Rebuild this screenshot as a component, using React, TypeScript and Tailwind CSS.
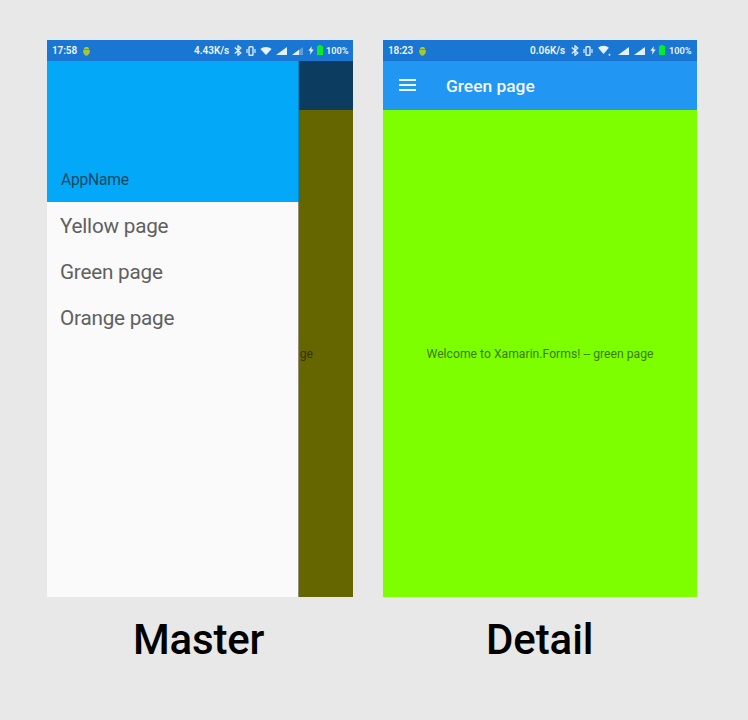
import React from "react";

function Android() {
  return (
    <svg width="7" height="10" viewBox="0 0 7 10" className="shrink-0">
      <path d="M.8 3.4C.8 1.6 2 1 3.5 1s2.7.6 2.7 2.4z" fill="#a4c639" />
      <path d="M.8 4h5.4v3.6L4.9 9.4H2.1L.8 7.6z" fill="#a4c639" />
      <path d="M.5 4v3M6.5 4v3" stroke="#8fbb5a" strokeWidth=".8" />
    </svg>
  );
}

function Bluetooth() {
  return (
    <svg width="8" height="11" viewBox="0 0 8 11" className="shrink-0">
      <path d="M.8 2.6l6 5.3L4 10.2V.8l2.8 2.3L.8 8.4" fill="none" stroke="#e3effb" strokeWidth="1.3" />
    </svg>
  );
}

function Vibrate() {
  return (
    <svg width="10" height="10" viewBox="0 0 10 10" className="shrink-0">
      <rect x="3" y=".8" width="4" height="8.4" rx=".8" fill="none" stroke="#dceafa" strokeWidth="1.4" />
      <path d="M1 3v4M9 3v4" stroke="#cfe2f7" strokeWidth="1.3" />
    </svg>
  );
}

function Wifi({ plus = false }: { plus?: boolean }) {
  return (
    <svg width={plus ? 14 : 12} height="12" viewBox={plus ? "0 0 14 12" : "0 0 12 12"} className="shrink-0">
      <path
        d={plus ? "M.1 2.8C2.8-.1 8.2-.1 10.9 2.8L5.5 8.9z" : "M.4 4C3.2 1.3 8.8 1.3 11.6 4L6 9.9z"}
        fill="#e8f2fc"
      />
      {plus && <path d="M10.3 9.8h2.4M11.5 8.6v2.4" stroke="#b9d6f4" strokeWidth=".9" />}
    </svg>
  );
}

function Signal({ weak = false }: { weak?: boolean }) {
  return (
    <svg width="11" height="8" viewBox="0 0 11 8" className="shrink-0">
      <path d="M0 8L11 0v8z" fill={weak ? "#5f9fde" : "#e3effb"} />
      {weak && <path d="M0 8L7 2.8V8z" fill="#e3effb" />}
    </svg>
  );
}

function Bolt() {
  return (
    <svg width="6" height="9" viewBox="0 0 6 9" className="shrink-0">
      <path d="M3.8.2L.3 4.8h2.2L1.9 8.8l3.9-5.2H3.4z" fill="#e3effb" />
    </svg>
  );
}

function Battery() {
  return (
    <svg width="6" height="10" viewBox="0 0 6 10" className="shrink-0">
      <path d="M1.6 0h2.8v1H6v9H0V1h1.6z" fill="#05ec2a" />
    </svg>
  );
}

function StatusBar({ time, speed, detail = false }: { time: string; speed: string; detail?: boolean }) {
  return (
    <div className="flex h-[21px] shrink-0 items-center bg-[#1976d2] px-[5px] text-[10px] font-semibold leading-[21px] text-[#edf5fd]">
      <span className="w-[31px] tracking-[-0.1px]">{time}</span>
      <Android />
      <span className={detail ? "ml-auto w-[36px] whitespace-nowrap" : "ml-auto w-[35px] whitespace-nowrap"}>{speed}</span>
      <span className="ml-[5px] flex"><Bluetooth /></span>
      <span className="ml-1 flex"><Vibrate /></span>
      <span className={detail ? "ml-[5px] flex" : "ml-1 flex"}><Wifi plus={detail} /></span>
      <span className={detail ? "ml-[6px] flex" : "ml-[4px] flex"}><Signal /></span>
      <span className="ml-[5px] flex"><Signal weak={!detail} /></span>
      <span className="ml-[5px] flex"><Bolt /></span>
      <span className="-mt-px ml-[3px] flex"><Battery /></span>
      <span className={detail ? "ml-[4px] w-[23px] whitespace-nowrap text-[9.2px]" : "ml-[3px] w-[22px] whitespace-nowrap text-[9.2px]"}>100%</span>
    </div>
  );
}

function Master() {
  return (
    <section className="w-[306px]">
      <div className="flex h-[557px] flex-col overflow-hidden">
        <StatusBar time="17:58" speed="4.43K/s" />
        <div className="flex min-h-0 flex-1">
          <aside className="flex w-[252px] shrink-0 flex-col bg-[#fafafa]">
            <header className="flex h-[141px] items-end border-r border-[#0b86c4] bg-[#03a9f8] pb-[12px] pl-[14px] text-[15.6px] leading-5 tracking-[-0.2px] text-[#154864]">
              AppName
            </header>
            <nav className="flex flex-1 flex-col border-r border-[#8f8f74] pl-[13px] pt-px text-[20.7px] leading-[46px] tracking-[-0.22px] text-[#606060]">
              <span className="h-[46px]">Yellow page</span>
              <span className="h-[46px]">Green page</span>
              <span className="h-[46px]">Orange page</span>
            </nav>
          </aside>
          <div className="flex min-w-0 flex-1 flex-col bg-[#666600]">
            <div className="h-[49px] shrink-0 bg-[#0d3c61]" />
            <div className="mt-[236px] flex h-4 justify-end whitespace-nowrap pr-[40px] text-[12.2px] leading-4 text-[#333300]">
              ge
            </div>
          </div>
        </div>
      </div>
      <h2 className="mt-[18px] pl-[86px] text-[42px] font-medium leading-[50px] tracking-[-0.2px] text-black">Master</h2>
    </section>
  );
}

function Detail() {
  return (
    <section className="w-[314px]">
      <div className="flex h-[557px] flex-col">
        <StatusBar time="18:23" speed="0.06K/s" detail />
        <header className="flex h-[49px] shrink-0 items-center bg-[#2196f3] pl-4">
          <svg width="17" height="12" viewBox="0 0 17 12" className="-mt-px">
            <path d="M0 1h17M0 6h17M0 11h17" stroke="#edf6fe" strokeWidth="1.9" />
          </svg>
          <span className="ml-[30px] pt-[2px] text-[17.4px] font-medium text-[#f3f9ff]">Green page</span>
        </header>
        <main className="flex flex-1 items-center justify-center whitespace-nowrap bg-[#7dff00] pt-[2px] text-[12.2px] text-[#3b7a05]">
          Welcome to Xamarin.Forms! -- green page
        </main>
      </div>
      <h2 className="mt-[18px] pl-[103px] text-[42px] font-medium leading-[50px] tracking-[-0.1px] text-black">Detail</h2>
    </section>
  );
}

export default function App() {
  return (
    <div className="flex h-[720px] w-[748px] gap-[30px] overflow-hidden bg-[#e8e8e8] pl-[47px] pt-[40px] font-[Roboto,sans-serif]">
      <Master />
      <Detail />
    </div>
  );
}
